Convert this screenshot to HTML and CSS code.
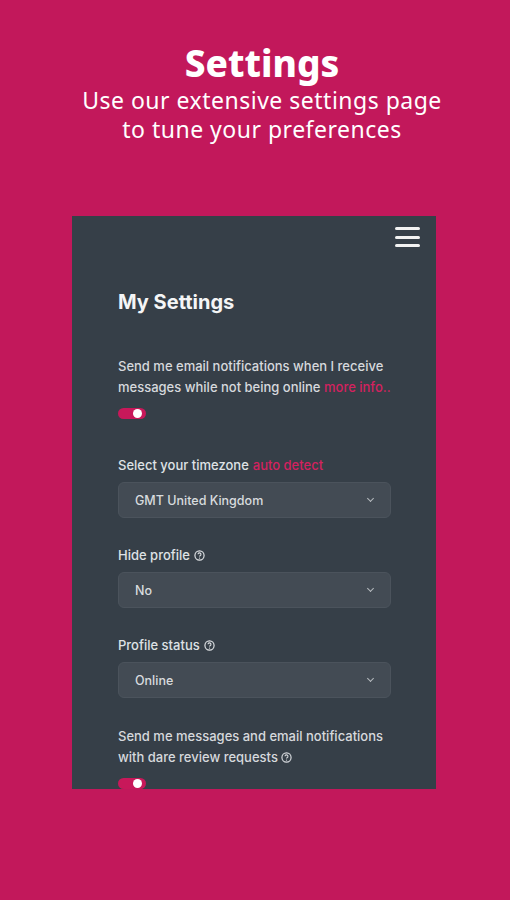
FILE: index.html
```html
<!DOCTYPE html>
<html lang="en">
    <head>
        <meta charset="UTF-8">
        <meta name="viewport" content="width=device-width, initial-scale=1.0">
        <title>Settings</title>
        <link rel="stylesheet" href="styles.css">
    </head>
    <body>

        <!-- Cabecalho -->
        <header class="hero">
            <h1>Settings</h1>
            <p>Use our extensive settings page<br>to tune your preferences</p>
        </header>

        <!-- Painel do telefone -->
        <div class="panel">
            <div class="topbar">
                <span class="burger"><i></i><i></i><i></i></span>
            </div>

            <h2>My Settings</h2>

            <p class="text">Send me email notifications when I receive messages while not being online <a href="#" class="link">more info..</a></p>
            <span class="toggle"></span>

            <label class="label label-first">Select your timezone <a href="#" class="link">auto detect</a></label>
            <div class="select">GMT United Kingdom <span class="chevron"></span></div>

            <label class="label">Hide profile
                <svg class="help" viewBox="0 0 12 12"><circle cx="6" cy="6" r="5" fill="none" stroke="currentColor" stroke-width="1.3"/><path d="M4.4 4.7a1.6 1.6 0 1 1 2.2 1.5c-.5.2-.6.5-.6 1" fill="none" stroke="currentColor" stroke-width="1.2"/><circle cx="6" cy="8.8" r=".7" fill="currentColor"/></svg>
            </label>
            <div class="select">No <span class="chevron"></span></div>

            <label class="label">Profile status
                <svg class="help" viewBox="0 0 12 12"><circle cx="6" cy="6" r="5" fill="none" stroke="currentColor" stroke-width="1.3"/><path d="M4.4 4.7a1.6 1.6 0 1 1 2.2 1.5c-.5.2-.6.5-.6 1" fill="none" stroke="currentColor" stroke-width="1.2"/><circle cx="6" cy="8.8" r=".7" fill="currentColor"/></svg>
            </label>
            <div class="select">Online <span class="chevron"></span></div>

            <p class="text text-last">Send me messages and email notifications with dare review requests
                <svg class="help" viewBox="0 0 12 12"><circle cx="6" cy="6" r="5" fill="none" stroke="currentColor" stroke-width="1.3"/><path d="M4.4 4.7a1.6 1.6 0 1 1 2.2 1.5c-.5.2-.6.5-.6 1" fill="none" stroke="currentColor" stroke-width="1.2"/><circle cx="6" cy="8.8" r=".7" fill="currentColor"/></svg>
            </p>
            <span class="toggle"></span>
        </div>

    </body>
</html>
```

FILE: styles.css
```css
/* Fundo rosa */
body {
    margin: 0;
    padding: 0;
    height: 900px;
    background: #c2185b;
    font-family: Inter, "Liberation Sans", sans-serif;
    overflow: hidden;
}

/* Cabecalho */
.hero {
    text-align: center;
    color: white;
    padding: 40px 0 0 14px;
}

.hero h1 {
    margin: 0;
    font-family: "Noto Sans", sans-serif;
    font-size: 37px;
    font-weight: 800;
    line-height: 46px;
}

.hero p {
    margin: 0;
    font-family: "Noto Sans", sans-serif;
    font-size: 23px;
    line-height: 29px;
    letter-spacing: 0.5px;
}

/* Painel escuro */
.panel {
    width: 364px;
    height: 573px;
    margin: 72px auto 0 72px;
    background: #363f48;
    padding: 10px 45px 0 46px;
    box-sizing: border-box;
    overflow: hidden;
    color: #d6d9dd;
}

.topbar {
    display: flex;
    justify-content: flex-end;
    margin-right: -29px;
}

.burger {
    display: flex;
    flex-direction: column;
    justify-content: space-between;
    width: 25px;
    height: 20px;
    padding: 1px 0;
}

.burger i {
    display: block;
    height: 3px;
    background: #f2f2f2;
    border-radius: 2px;
}

.panel h2 {
    margin: 42px 0 0;
    font-size: 20px;
    line-height: 24px;
    font-weight: 700;
    color: #f4f5f6;
}

.text {
    margin: 42px 0 0;
    font-size: 13px;
    font-weight: 500;
    line-height: 21px;
}

.text-last {
    margin-top: 28px;
}

.link {
    color: #d3225f;
    text-decoration: none;
}

/* Interruptor */
.toggle {
    display: block;
    position: relative;
    width: 28px;
    height: 11px;
    margin-top: 10px;
    border-radius: 6px;
    background: #c8185a;
}

.toggle::after {
    content: "";
    position: absolute;
    right: 4px;
    top: 1px;
    width: 9px;
    height: 9px;
    border-radius: 50%;
    background: white;
}

/* Campos */
.label {
    display: flex;
    align-items: center;
    gap: 4px;
    margin-top: 27px;
    font-size: 13px;
    font-weight: 500;
    line-height: 20px;
    color: #dfe2e5;
}

.label-first {
    margin-top: 36px;
}

.help {
    width: 11px;
    height: 11px;
    vertical-align: -1px;
}

.select {
    display: flex;
    align-items: center;
    justify-content: space-between;
    height: 36px;
    margin-top: 7px;
    padding: 0 17px 0 16px;
    box-sizing: border-box;
    background: #434b54;
    border: 1px solid #4b535c;
    border-radius: 6px;
    font-size: 12.5px;
    font-weight: 500;
    color: #d8dbde;
}

.chevron {
    width: 4px;
    height: 4px;
    border-right: 1.3px solid #b5babf;
    border-bottom: 1.3px solid #b5babf;
    transform: rotate(45deg);
    margin-top: -3px;
}
```
